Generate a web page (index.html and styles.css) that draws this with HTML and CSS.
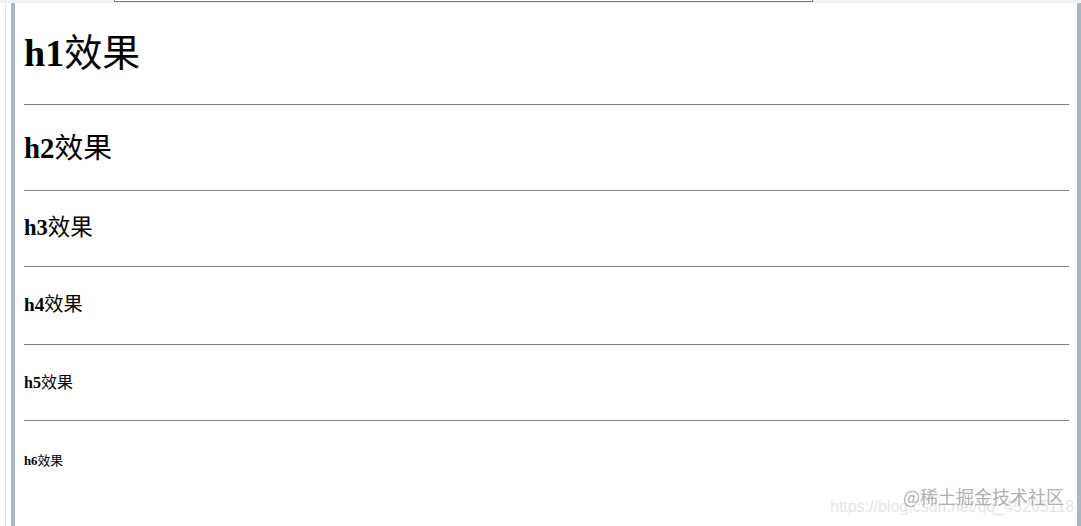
FILE: index.html
```html
<!DOCTYPE html>
<html lang="zh">
<head>
<meta charset="utf-8">
<title>h效果</title>
<link rel="stylesheet" href="styles.css">
</head>
<body>
<div class="topbar"><div class="addr"></div></div>
<div class="page">
  <div class="gutter"></div>
  <div class="frame">
    <h1 class="h h1">h1<span class="zh">效果</span></h1>
    <hr class="rule">
    <h2 class="h h2">h2<span class="zh">效果</span></h2>
    <hr class="rule">
    <h3 class="h h3">h3<span class="zh">效果</span></h3>
    <hr class="rule">
    <h4 class="h h4">h4<span class="zh">效果</span></h4>
    <hr class="rule">
    <h5 class="h h5">h5<span class="zh">效果</span></h5>
    <hr class="rule">
    <h6 class="h h6">h6<span class="zh">效果</span></h6>
  </div>
</div>
<div class="mark-url">https://blog.csdn.net/qq_45265118</div>
<div class="mark">@稀土掘金技术社区</div>
</body>
</html>
```
FILE: styles.css
```css
html, body {
  margin: 0;
  padding: 0;
  background: #ffffff;
}
body {
  width: 1081px;
  height: 526px;
  overflow: hidden;
  display: flex;
  flex-direction: column;
  position: relative;
  font-family: "Liberation Serif", "Noto Sans CJK SC", serif;
  color: #000;
}
.topbar {
  height: 3px;
  background: #f0f0f0;
  flex: none;
  position: relative;
}
.addr {
  margin-left: 114px;
  width: 697px;
  height: 1px;
  background: #fff;
  border: 1px solid #7a7a7a;
  border-top: 0;
}
.page {
  flex: 1;
  display: flex;
}
.gutter {
  width: 11px;
  flex: none;
  background: linear-gradient(to right, #fff 0, #fff 5px, #e3e3e3 5px, #e3e3e3 6px, #fff 6px);
}
.frame {
  flex: 1;
  border-left: 4px solid #a7b6c9;
  border-right: 4px solid #a7b6c9;
  padding: 0 8px 0 9px;
  display: flex;
  flex-direction: column;
}
.h {
  font-weight: bold;
  margin: 0;
  white-space: nowrap;
}
.zh {
  font-family: "Noto Sans CJK SC", sans-serif;
  font-weight: 400;
  line-height: 0;
}
.h1 { font-size: 38px; line-height: 44px; margin: 28px 0 29px; }
.h2 { font-size: 28.8px; line-height: 36px; margin: 25px 0 24px; }
.h3 { font-size: 22.5px; line-height: 30px; margin: 22px 0 23px; }
.h4 { font-size: 19.2px; line-height: 26px; margin: 25px 0 26px; }
.h5 { font-size: 16px; line-height: 22px; margin: 27px 0 26px; }
.h6 { font-size: 12.8px; line-height: 18px; margin: 31px 0 0; }
.rule {
  margin: 0;
  border: 0;
  height: 1px;
  background: #808080;
  flex: none;
}
.mark-url {
  position: absolute;
  left: 830px;
  top: 498px;
  font-family: "Liberation Sans", sans-serif;
  font-size: 16px;
  color: #e6e6e6;
  white-space: nowrap;
}
.mark {
  position: absolute;
  left: 903px;
  top: 483px;
  font-family: "Noto Sans CJK SC", sans-serif;
  font-size: 18px;
  line-height: 26px;
  color: #b0b0b0;
  white-space: nowrap;
}
```
